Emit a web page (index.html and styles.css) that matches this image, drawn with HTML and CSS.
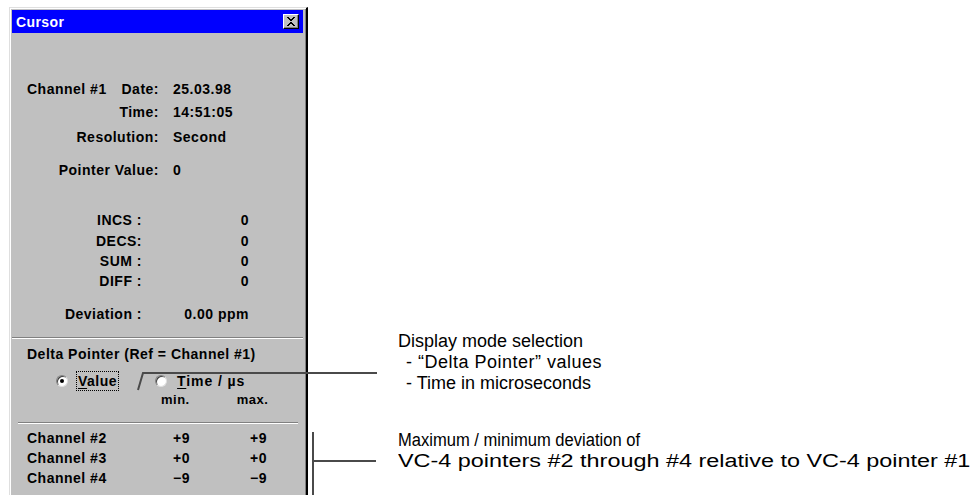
FILE: index.html
```html
<!DOCTYPE html>
<html>
<head>
<meta charset="utf-8">
<link rel="stylesheet" href="styles.css">
</head>
<body>
<div class="page">
  <div class="dialog">
    <div class="titlebar">
      <span class="title">Cursor</span>
      <span class="close"><svg width="10" height="9" viewBox="0 0 10 9"><path d="M1 0h2v1h1v1h2V1h1V0h2v1H8v1H7v1H6v1H5v1h1v1h1v1h1v1h1v1H7V8H6V7H4v1H3v1H1V8h1V7h1V6h1V5h1V4H4V3H3V2H2V1H1z" fill="#000"/></svg></span>
    </div>
    <div class="body">
      <div class="info">
        <div class="row r1"><div class="lbl split"><span>Channel #1</span><span>Date:</span></div><div class="val">25.03.98</div></div>
        <div class="row r2"><div class="lbl">Time:</div><div class="val">14:51:05</div></div>
        <div class="row r3"><div class="lbl">Resolution:</div><div class="val">Second</div></div>
        <div class="row r4"><div class="lbl">Pointer Value:</div><div class="val">0</div></div>
      </div>
      <div class="counts">
        <div class="crow"><div class="clbl">INCS :</div><div class="cval">0</div></div>
        <div class="crow"><div class="clbl">DECS:</div><div class="cval">0</div></div>
        <div class="crow"><div class="clbl">SUM :</div><div class="cval">0</div></div>
        <div class="crow"><div class="clbl">DIFF :</div><div class="cval">0</div></div>
        <div class="crow dev"><div class="clbl">Deviation :</div><div class="cval">0.00 ppm</div></div>
      </div>
      <div class="sep"></div>
      <div class="delta-title">Delta Pointer (Ref = Channel #1)</div>
      <div class="radios">
        <div class="radio checked"><span class="dot"></span><span class="rlabel focus"><u>V</u>alue</span></div>
        <div class="radio"><span class="dot"></span><span class="rlabel"><u>T</u>ime / µs</span></div>
      </div>
      <div class="minmax"><span class="mm min">min.</span><span class="mm max">max.</span></div>
      <div class="sep sep2"></div>
      <div class="channels">
        <div class="chrow"><span class="chname">Channel #2</span><span class="chmin">+9</span><span class="chmax">+9</span></div>
        <div class="chrow"><span class="chname">Channel #3</span><span class="chmin">+0</span><span class="chmax">+0</span></div>
        <div class="chrow"><span class="chname">Channel #4</span><span class="chmin">&minus;9</span><span class="chmax">&minus;9</span></div>
      </div>
    </div>
  </div>
  <div class="notes">
    <div class="note note1">
      <div>Display mode selection</div>
      <div class="sub wide">- “Delta Pointer” values</div>
      <div class="sub">- Time in microseconds</div>
    </div>
    <div class="note note2">
      <div class="tight">Maximum / minimum deviation of</div>
      <div class="spread">VC-4 pointers #2 through #4 relative to VC-4 pointer #1</div>
    </div>
  </div>
  <svg class="leaders" width="978" height="495" viewBox="0 0 978 495">
    <path d="M138 390 L143 373 L377 373" fill="none" stroke="#4a4a4a" stroke-width="2"/>
    <path d="M313 432 L313 495 M313 461 L376 461" fill="none" stroke="#4a4a4a" stroke-width="2"/>
  </svg>
</div>
</body>
</html>
```
FILE: styles.css
```css
html, body {
  margin: 0;
  padding: 0;
  background: #fff;
}
.page {
  position: relative;
  width: 978px;
  height: 495px;
  overflow: hidden;
  display: flex;
  align-items: flex-start;
}
.dialog {
  margin-left: 9px;
  margin-top: 7px;
  width: 299px;
  height: 520px;
  flex: none;
  box-sizing: border-box;
  background: #c0c0c0;
  border-top: 1px solid #dfdfdf;
  border-left: 1px solid #dfdfdf;
  border-right: 2px solid #000;
  border-bottom: 1px solid #000;
  box-shadow: inset 1px 1px 0 #fff, inset -1px -1px 0 #808080;
  padding: 2px 3px 2px 2px;
  font-family: "Liberation Sans", Arial, sans-serif;
  font-weight: bold;
  font-size: 14px;
  letter-spacing: 0.5px;
  color: #000;
}
.titlebar {
  height: 23px;
  background: #0000ff;
  display: flex;
  align-items: center;
  justify-content: space-between;
  padding: 0 4px 0 4px;
}
.title {
  color: #fff;
  font-size: 14px;
  letter-spacing: 0.4px;
}
.close {
  width: 16px;
  height: 15px;
  box-sizing: border-box;
  background: #c0c0c0;
  border-top: 1px solid #fff;
  border-left: 1px solid #fff;
  border-right: 1px solid #000;
  border-bottom: 1px solid #000;
  box-shadow: inset -1px -1px 0 #808080;
  display: flex;
  align-items: center;
  justify-content: center;
  padding: 0 1px 1px 0;
}
.close svg { display: block; }
.body {
  padding-left: 15px;
}
.row, .crow, .chrow {
  height: 20px;
  line-height: 20px;
  display: flex;
  white-space: nowrap;
}
.r1 { margin-top: 46px; }
.r2 { margin-top: 3px; }
.r3 { margin-top: 5px; }
.r4 { margin-top: 13px; }
.lbl {
  width: 132px;
  text-align: right;
  flex: none;
}
.lbl.split {
  display: flex;
  justify-content: space-between;
}
.val {
  margin-left: 14px;
}
.counts {
  margin-top: 30px;
}
.counts .crow:nth-child(2) { margin-top: 1px; }
.crow.dev { margin-top: 13px; }
.clbl {
  width: 115px;
  text-align: right;
  flex: none;
}
.cval {
  width: 107px;
  text-align: right;
  flex: none;
}
.sep {
  margin: 13px 0 0 -15px;
  height: 0;
  border-top: 1px solid #808080;
  border-bottom: 1px solid #fff;
  width: 291px;
}
.delta-title {
  margin-top: 5px;
  height: 20px;
  line-height: 20px;
  white-space: nowrap;
}
.radios {
  margin-top: 7px;
  height: 20px;
  display: flex;
  align-items: center;
  padding-left: 29px;
}
.radio {
  display: flex;
  align-items: center;
}
.radio + .radio {
  margin-left: 37px;
}
.dot {
  width: 12px;
  height: 12px;
  box-sizing: border-box;
  border-radius: 50%;
  background: #fff;
  border: 1px solid;
  border-color: #808080 #dfdfdf #dfdfdf #808080;
  box-shadow: inset 1px 1px 0 #404040;
  position: relative;
  margin-right: 9px;
}
.radio.checked .dot::after {
  content: "";
  position: absolute;
  left: 3px;
  top: 3px;
  width: 4px;
  height: 4px;
  border-radius: 50%;
  background: #000;
}
.rlabel {
  line-height: 18px;
  padding: 0 1px;
}
.radio + .radio .rlabel {
  letter-spacing: 0.9px;
}
.rlabel.focus {
  outline: 1px dotted #000;
  outline-offset: 0;
}
.rlabel u {
  text-decoration-thickness: 1px;
  text-underline-offset: 2px;
}
.minmax {
  height: 18px;
  line-height: 18px;
  display: flex;
  font-size: 13px;
}
.mm.min { margin-left: 134px; }
.mm.max { margin-left: 47px; }
.sep2 {
  margin-top: 13px;
  margin-left: -9px;
  width: 280px;
}
.channels {
  margin-top: 4px;
}
.chname {
  width: 120px;
  flex: none;
}
.chmin {
  width: 43px;
  text-align: right;
  flex: none;
}
.chmax {
  width: 77px;
  text-align: right;
  flex: none;
}
.notes {
  margin-left: 90px;
  font-family: "Liberation Sans", Arial, sans-serif;
  font-size: 18px;
  line-height: 21px;
  color: #000;
  white-space: nowrap;
}
.note1 { margin-top: 331px; }
.note2 { margin-top: 36px; }
.sub { padding-left: 8px; }
.sub.wide { letter-spacing: 0.5px; }
.tight {
  transform: scaleX(0.92);
  transform-origin: 0 50%;
}
.spread {
  transform: scaleX(1.3);
  transform-origin: 0 50%;
}
.leaders {
  position: absolute;
  left: 0;
  top: 0;
  pointer-events: none;
}
```
